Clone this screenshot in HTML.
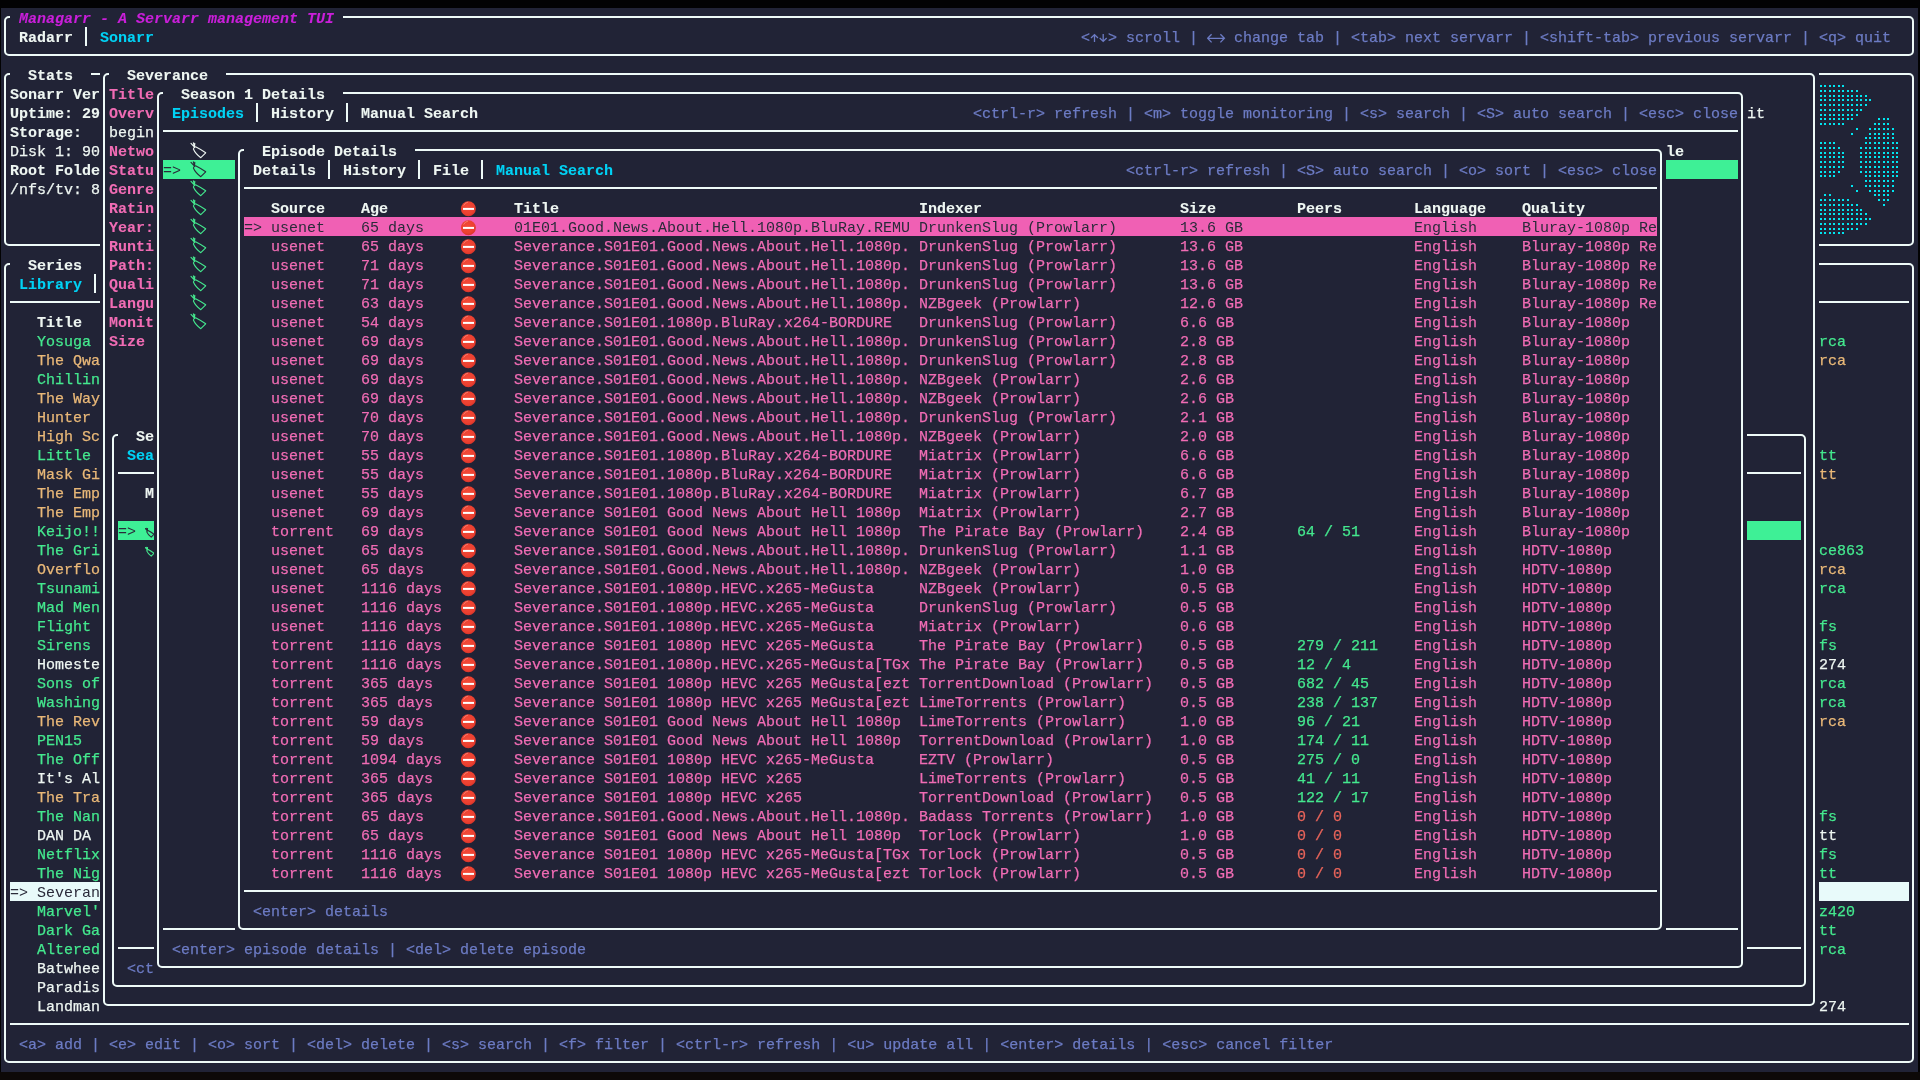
<!DOCTYPE html>
<html><head><meta charset="utf-8"><title>Managarr</title><style>
html,body{margin:0;padding:0;}
body{width:1920px;height:1080px;background:#020203;position:relative;overflow:hidden;}
#wrap{position:absolute;left:0;top:0;width:1920px;height:1080px;will-change:transform;}
#bot{position:absolute;left:0;top:1072px;width:1920px;height:8px;background:#0d0908;}
#term{position:absolute;left:1px;top:8px;width:1917px;height:1064px;background:#212336;}
.r,.b,.t,.s{position:absolute;}
.b{border:2px solid;border-radius:5px;}
.t{-webkit-text-stroke:0.25px currentColor;font-family:"Liberation Mono",monospace;font-size:15px;line-height:19px;height:19px;white-space:pre;}
.B{font-weight:bold;-webkit-text-stroke:0.1px currentColor;}
.I{font-style:italic;}
.D{-webkit-text-stroke:0;}
</style></head>
<body><svg width="0" height="0" style="position:absolute"><defs><radialGradient id="ng" cx="0.45" cy="0.4" r="0.6"><stop offset="0" stop-color="#f24a38"/><stop offset="0.75" stop-color="#ec4030"/><stop offset="1" stop-color="#d8342a"/></radialGradient></defs></svg><div id="term"></div><div id="bot"></div>
<div id="wrap">
<div class="r" style="left:1px;top:8px;width:1917px;height:57px;background:#212336"></div>
<div class="b" style="left:4px;top:16px;width:1906px;height:36px;border-color:#eefaf8"></div>
<div class="r" style="left:10px;top:8px;width:333px;height:19px;background:#212336"></div>
<div class="t B I" style="left:19px;top:9.5px;color:#ca1fda">Managarr - A Servarr management TUI</div>
<div class="t B" style="left:19px;top:28.5px;color:#eef6f2">Radarr</div>
<div class="r" style="left:85px;top:27px;width:2px;height:19px;background:#eefaf8"></div>
<div class="t B" style="left:100px;top:28.5px;color:#00d2f5">Sonarr</div>
<div class="t" style="left:1081px;top:28.5px;color:#6c7bc4">&lt;  &gt; scroll | </div>
<div class="t" style="left:1225px;top:28.5px;color:#6c7bc4"> change tab | &lt;tab&gt; next servarr | &lt;shift-tab&gt; previous servarr | &lt;q&gt; quit</div>
<svg class="s" style="left:1090px;top:27px" width="18" height="19" viewBox="0 0 18 19"><g fill="none" stroke="#6c7bc4" stroke-width="1.3" stroke-linecap="butt" stroke-linejoin="miter"><path d="M4.5 7.6 V15 M1 11 L4.5 7.6 L8 11"/><path d="M13.2 7 V14.4 M9.7 11 L13.2 14.4 L16.7 11"/></g></svg>
<svg class="s" style="left:1207px;top:27px" width="20" height="19" viewBox="0 0 20 19"><g fill="none" stroke="#6c7bc4" stroke-width="1.3" stroke-linecap="butt" stroke-linejoin="miter"><path d="M0.6 11.3 H17.4 M4.6 7.2 L0.6 11.3 L4.6 15.4 M13.4 7.2 L17.4 11.3 L13.4 15.4"/></g></svg>
<div class="r" style="left:1px;top:65px;width:1089px;height:190px;background:#212336"></div>
<div class="b" style="left:4px;top:73px;width:1078px;height:169px;border-color:#eefaf8"></div>
<div class="r" style="left:10px;top:65px;width:81px;height:19px;background:#212336"></div>
<div class="t B" style="left:28px;top:66.5px;color:#eef6f2">Stats</div>
<div class="t B" style="left:10px;top:85.5px;color:#eef6f2">Sonarr Ver</div>
<div class="t B" style="left:10px;top:104.5px;color:#eef6f2">Uptime: 29</div>
<div class="t B" style="left:10px;top:123.5px;color:#eef6f2">Storage:</div>
<div class="t" style="left:10px;top:142.5px;color:#eef6f2">Disk 1: 90</div>
<div class="t B" style="left:10px;top:161.5px;color:#eef6f2">Root Folde</div>
<div class="t" style="left:10px;top:180.5px;color:#eef6f2">/nfs/tv: 8</div>
<div class="r" style="left:1351px;top:65px;width:567px;height:190px;background:#212336"></div>
<div class="b" style="left:1354px;top:73px;width:556px;height:169px;border-color:#eefaf8"></div>
<svg class="s" style="left:1819px;top:84px" width="90" height="152" fill="#00e5f0"><rect x="1" y="1" width="2" height="2"/><rect x="5" y="1" width="2" height="2"/><rect x="10" y="1" width="2" height="2"/><rect x="14" y="1" width="2" height="2"/><rect x="19" y="1" width="2" height="2"/><rect x="23" y="1" width="2" height="2"/><rect x="1" y="6" width="2" height="2"/><rect x="5" y="6" width="2" height="2"/><rect x="10" y="6" width="2" height="2"/><rect x="14" y="6" width="2" height="2"/><rect x="19" y="6" width="2" height="2"/><rect x="23" y="6" width="2" height="2"/><rect x="28" y="6" width="2" height="2"/><rect x="32" y="6" width="2" height="2"/><rect x="37" y="6" width="2" height="2"/><rect x="1" y="11" width="2" height="2"/><rect x="5" y="11" width="2" height="2"/><rect x="10" y="11" width="2" height="2"/><rect x="14" y="11" width="2" height="2"/><rect x="19" y="11" width="2" height="2"/><rect x="23" y="11" width="2" height="2"/><rect x="28" y="11" width="2" height="2"/><rect x="32" y="11" width="2" height="2"/><rect x="37" y="11" width="2" height="2"/><rect x="41" y="11" width="2" height="2"/><rect x="46" y="11" width="2" height="2"/><rect x="1" y="15" width="2" height="2"/><rect x="5" y="15" width="2" height="2"/><rect x="10" y="15" width="2" height="2"/><rect x="14" y="15" width="2" height="2"/><rect x="19" y="15" width="2" height="2"/><rect x="23" y="15" width="2" height="2"/><rect x="28" y="15" width="2" height="2"/><rect x="32" y="15" width="2" height="2"/><rect x="37" y="15" width="2" height="2"/><rect x="41" y="15" width="2" height="2"/><rect x="46" y="15" width="2" height="2"/><rect x="50" y="15" width="2" height="2"/><rect x="1" y="20" width="2" height="2"/><rect x="5" y="20" width="2" height="2"/><rect x="10" y="20" width="2" height="2"/><rect x="14" y="20" width="2" height="2"/><rect x="19" y="20" width="2" height="2"/><rect x="23" y="20" width="2" height="2"/><rect x="28" y="20" width="2" height="2"/><rect x="32" y="20" width="2" height="2"/><rect x="37" y="20" width="2" height="2"/><rect x="41" y="20" width="2" height="2"/><rect x="46" y="20" width="2" height="2"/><rect x="1" y="25" width="2" height="2"/><rect x="5" y="25" width="2" height="2"/><rect x="10" y="25" width="2" height="2"/><rect x="14" y="25" width="2" height="2"/><rect x="19" y="25" width="2" height="2"/><rect x="23" y="25" width="2" height="2"/><rect x="28" y="25" width="2" height="2"/><rect x="32" y="25" width="2" height="2"/><rect x="37" y="25" width="2" height="2"/><rect x="41" y="25" width="2" height="2"/><rect x="1" y="30" width="2" height="2"/><rect x="5" y="30" width="2" height="2"/><rect x="10" y="30" width="2" height="2"/><rect x="14" y="30" width="2" height="2"/><rect x="19" y="30" width="2" height="2"/><rect x="23" y="30" width="2" height="2"/><rect x="28" y="30" width="2" height="2"/><rect x="32" y="30" width="2" height="2"/><rect x="37" y="30" width="2" height="2"/><rect x="1" y="34" width="2" height="2"/><rect x="5" y="34" width="2" height="2"/><rect x="10" y="34" width="2" height="2"/><rect x="14" y="34" width="2" height="2"/><rect x="19" y="34" width="2" height="2"/><rect x="23" y="34" width="2" height="2"/><rect x="28" y="34" width="2" height="2"/><rect x="32" y="34" width="2" height="2"/><rect x="59" y="34" width="2" height="2"/><rect x="64" y="34" width="2" height="2"/><rect x="68" y="34" width="2" height="2"/><rect x="1" y="39" width="2" height="2"/><rect x="5" y="39" width="2" height="2"/><rect x="10" y="39" width="2" height="2"/><rect x="14" y="39" width="2" height="2"/><rect x="19" y="39" width="2" height="2"/><rect x="23" y="39" width="2" height="2"/><rect x="55" y="39" width="2" height="2"/><rect x="59" y="39" width="2" height="2"/><rect x="64" y="39" width="2" height="2"/><rect x="68" y="39" width="2" height="2"/><rect x="37" y="44" width="2" height="2"/><rect x="50" y="44" width="2" height="2"/><rect x="55" y="44" width="2" height="2"/><rect x="59" y="44" width="2" height="2"/><rect x="64" y="44" width="2" height="2"/><rect x="68" y="44" width="2" height="2"/><rect x="73" y="44" width="2" height="2"/><rect x="32" y="49" width="2" height="2"/><rect x="50" y="49" width="2" height="2"/><rect x="55" y="49" width="2" height="2"/><rect x="59" y="49" width="2" height="2"/><rect x="64" y="49" width="2" height="2"/><rect x="68" y="49" width="2" height="2"/><rect x="73" y="49" width="2" height="2"/><rect x="46" y="53" width="2" height="2"/><rect x="50" y="53" width="2" height="2"/><rect x="55" y="53" width="2" height="2"/><rect x="59" y="53" width="2" height="2"/><rect x="64" y="53" width="2" height="2"/><rect x="68" y="53" width="2" height="2"/><rect x="73" y="53" width="2" height="2"/><rect x="1" y="58" width="2" height="2"/><rect x="5" y="58" width="2" height="2"/><rect x="10" y="58" width="2" height="2"/><rect x="14" y="58" width="2" height="2"/><rect x="46" y="58" width="2" height="2"/><rect x="50" y="58" width="2" height="2"/><rect x="55" y="58" width="2" height="2"/><rect x="59" y="58" width="2" height="2"/><rect x="64" y="58" width="2" height="2"/><rect x="68" y="58" width="2" height="2"/><rect x="73" y="58" width="2" height="2"/><rect x="77" y="58" width="2" height="2"/><rect x="1" y="63" width="2" height="2"/><rect x="5" y="63" width="2" height="2"/><rect x="10" y="63" width="2" height="2"/><rect x="14" y="63" width="2" height="2"/><rect x="19" y="63" width="2" height="2"/><rect x="41" y="63" width="2" height="2"/><rect x="46" y="63" width="2" height="2"/><rect x="50" y="63" width="2" height="2"/><rect x="55" y="63" width="2" height="2"/><rect x="59" y="63" width="2" height="2"/><rect x="64" y="63" width="2" height="2"/><rect x="68" y="63" width="2" height="2"/><rect x="73" y="63" width="2" height="2"/><rect x="77" y="63" width="2" height="2"/><rect x="1" y="68" width="2" height="2"/><rect x="5" y="68" width="2" height="2"/><rect x="10" y="68" width="2" height="2"/><rect x="14" y="68" width="2" height="2"/><rect x="19" y="68" width="2" height="2"/><rect x="23" y="68" width="2" height="2"/><rect x="41" y="68" width="2" height="2"/><rect x="46" y="68" width="2" height="2"/><rect x="50" y="68" width="2" height="2"/><rect x="55" y="68" width="2" height="2"/><rect x="59" y="68" width="2" height="2"/><rect x="64" y="68" width="2" height="2"/><rect x="68" y="68" width="2" height="2"/><rect x="73" y="68" width="2" height="2"/><rect x="77" y="68" width="2" height="2"/><rect x="1" y="72" width="2" height="2"/><rect x="5" y="72" width="2" height="2"/><rect x="10" y="72" width="2" height="2"/><rect x="14" y="72" width="2" height="2"/><rect x="19" y="72" width="2" height="2"/><rect x="23" y="72" width="2" height="2"/><rect x="41" y="72" width="2" height="2"/><rect x="46" y="72" width="2" height="2"/><rect x="50" y="72" width="2" height="2"/><rect x="55" y="72" width="2" height="2"/><rect x="59" y="72" width="2" height="2"/><rect x="64" y="72" width="2" height="2"/><rect x="68" y="72" width="2" height="2"/><rect x="73" y="72" width="2" height="2"/><rect x="77" y="72" width="2" height="2"/><rect x="1" y="77" width="2" height="2"/><rect x="5" y="77" width="2" height="2"/><rect x="10" y="77" width="2" height="2"/><rect x="14" y="77" width="2" height="2"/><rect x="19" y="77" width="2" height="2"/><rect x="23" y="77" width="2" height="2"/><rect x="41" y="77" width="2" height="2"/><rect x="46" y="77" width="2" height="2"/><rect x="50" y="77" width="2" height="2"/><rect x="55" y="77" width="2" height="2"/><rect x="59" y="77" width="2" height="2"/><rect x="64" y="77" width="2" height="2"/><rect x="68" y="77" width="2" height="2"/><rect x="73" y="77" width="2" height="2"/><rect x="77" y="77" width="2" height="2"/><rect x="1" y="82" width="2" height="2"/><rect x="5" y="82" width="2" height="2"/><rect x="10" y="82" width="2" height="2"/><rect x="14" y="82" width="2" height="2"/><rect x="19" y="82" width="2" height="2"/><rect x="23" y="82" width="2" height="2"/><rect x="41" y="82" width="2" height="2"/><rect x="46" y="82" width="2" height="2"/><rect x="50" y="82" width="2" height="2"/><rect x="55" y="82" width="2" height="2"/><rect x="59" y="82" width="2" height="2"/><rect x="64" y="82" width="2" height="2"/><rect x="68" y="82" width="2" height="2"/><rect x="73" y="82" width="2" height="2"/><rect x="77" y="82" width="2" height="2"/><rect x="1" y="87" width="2" height="2"/><rect x="5" y="87" width="2" height="2"/><rect x="10" y="87" width="2" height="2"/><rect x="14" y="87" width="2" height="2"/><rect x="19" y="87" width="2" height="2"/><rect x="41" y="87" width="2" height="2"/><rect x="46" y="87" width="2" height="2"/><rect x="50" y="87" width="2" height="2"/><rect x="55" y="87" width="2" height="2"/><rect x="59" y="87" width="2" height="2"/><rect x="64" y="87" width="2" height="2"/><rect x="68" y="87" width="2" height="2"/><rect x="73" y="87" width="2" height="2"/><rect x="77" y="87" width="2" height="2"/><rect x="1" y="91" width="2" height="2"/><rect x="5" y="91" width="2" height="2"/><rect x="10" y="91" width="2" height="2"/><rect x="14" y="91" width="2" height="2"/><rect x="46" y="91" width="2" height="2"/><rect x="50" y="91" width="2" height="2"/><rect x="55" y="91" width="2" height="2"/><rect x="59" y="91" width="2" height="2"/><rect x="64" y="91" width="2" height="2"/><rect x="68" y="91" width="2" height="2"/><rect x="73" y="91" width="2" height="2"/><rect x="77" y="91" width="2" height="2"/><rect x="46" y="96" width="2" height="2"/><rect x="50" y="96" width="2" height="2"/><rect x="55" y="96" width="2" height="2"/><rect x="59" y="96" width="2" height="2"/><rect x="64" y="96" width="2" height="2"/><rect x="68" y="96" width="2" height="2"/><rect x="73" y="96" width="2" height="2"/><rect x="32" y="101" width="2" height="2"/><rect x="46" y="101" width="2" height="2"/><rect x="50" y="101" width="2" height="2"/><rect x="55" y="101" width="2" height="2"/><rect x="59" y="101" width="2" height="2"/><rect x="64" y="101" width="2" height="2"/><rect x="68" y="101" width="2" height="2"/><rect x="73" y="101" width="2" height="2"/><rect x="37" y="106" width="2" height="2"/><rect x="50" y="106" width="2" height="2"/><rect x="55" y="106" width="2" height="2"/><rect x="59" y="106" width="2" height="2"/><rect x="64" y="106" width="2" height="2"/><rect x="68" y="106" width="2" height="2"/><rect x="73" y="106" width="2" height="2"/><rect x="5" y="110" width="2" height="2"/><rect x="10" y="110" width="2" height="2"/><rect x="55" y="110" width="2" height="2"/><rect x="59" y="110" width="2" height="2"/><rect x="64" y="110" width="2" height="2"/><rect x="68" y="110" width="2" height="2"/><rect x="1" y="115" width="2" height="2"/><rect x="5" y="115" width="2" height="2"/><rect x="10" y="115" width="2" height="2"/><rect x="14" y="115" width="2" height="2"/><rect x="19" y="115" width="2" height="2"/><rect x="23" y="115" width="2" height="2"/><rect x="28" y="115" width="2" height="2"/><rect x="59" y="115" width="2" height="2"/><rect x="64" y="115" width="2" height="2"/><rect x="68" y="115" width="2" height="2"/><rect x="1" y="120" width="2" height="2"/><rect x="5" y="120" width="2" height="2"/><rect x="10" y="120" width="2" height="2"/><rect x="14" y="120" width="2" height="2"/><rect x="19" y="120" width="2" height="2"/><rect x="23" y="120" width="2" height="2"/><rect x="28" y="120" width="2" height="2"/><rect x="32" y="120" width="2" height="2"/><rect x="37" y="120" width="2" height="2"/><rect x="64" y="120" width="2" height="2"/><rect x="1" y="125" width="2" height="2"/><rect x="5" y="125" width="2" height="2"/><rect x="10" y="125" width="2" height="2"/><rect x="14" y="125" width="2" height="2"/><rect x="19" y="125" width="2" height="2"/><rect x="23" y="125" width="2" height="2"/><rect x="28" y="125" width="2" height="2"/><rect x="32" y="125" width="2" height="2"/><rect x="37" y="125" width="2" height="2"/><rect x="41" y="125" width="2" height="2"/><rect x="1" y="129" width="2" height="2"/><rect x="5" y="129" width="2" height="2"/><rect x="10" y="129" width="2" height="2"/><rect x="14" y="129" width="2" height="2"/><rect x="19" y="129" width="2" height="2"/><rect x="23" y="129" width="2" height="2"/><rect x="28" y="129" width="2" height="2"/><rect x="32" y="129" width="2" height="2"/><rect x="37" y="129" width="2" height="2"/><rect x="41" y="129" width="2" height="2"/><rect x="46" y="129" width="2" height="2"/><rect x="1" y="134" width="2" height="2"/><rect x="5" y="134" width="2" height="2"/><rect x="10" y="134" width="2" height="2"/><rect x="14" y="134" width="2" height="2"/><rect x="19" y="134" width="2" height="2"/><rect x="23" y="134" width="2" height="2"/><rect x="28" y="134" width="2" height="2"/><rect x="32" y="134" width="2" height="2"/><rect x="37" y="134" width="2" height="2"/><rect x="41" y="134" width="2" height="2"/><rect x="46" y="134" width="2" height="2"/><rect x="50" y="134" width="2" height="2"/><rect x="1" y="139" width="2" height="2"/><rect x="5" y="139" width="2" height="2"/><rect x="10" y="139" width="2" height="2"/><rect x="14" y="139" width="2" height="2"/><rect x="19" y="139" width="2" height="2"/><rect x="23" y="139" width="2" height="2"/><rect x="28" y="139" width="2" height="2"/><rect x="32" y="139" width="2" height="2"/><rect x="37" y="139" width="2" height="2"/><rect x="41" y="139" width="2" height="2"/><rect x="46" y="139" width="2" height="2"/><rect x="1" y="144" width="2" height="2"/><rect x="5" y="144" width="2" height="2"/><rect x="10" y="144" width="2" height="2"/><rect x="14" y="144" width="2" height="2"/><rect x="19" y="144" width="2" height="2"/><rect x="23" y="144" width="2" height="2"/><rect x="28" y="144" width="2" height="2"/><rect x="32" y="144" width="2" height="2"/><rect x="37" y="144" width="2" height="2"/><rect x="1" y="148" width="2" height="2"/><rect x="5" y="148" width="2" height="2"/><rect x="10" y="148" width="2" height="2"/><rect x="14" y="148" width="2" height="2"/><rect x="19" y="148" width="2" height="2"/><rect x="23" y="148" width="2" height="2"/></svg>
<div class="r" style="left:1px;top:255px;width:1917px;height:817px;background:#212336"></div>
<div class="b" style="left:4px;top:263px;width:1906px;height:796px;border-color:#eefaf8"></div>
<div class="r" style="left:10px;top:255px;width:90px;height:19px;background:#212336"></div>
<div class="t B" style="left:28px;top:256.5px;color:#eef6f2">Series</div>
<div class="t B" style="left:19px;top:275.5px;color:#00d2f5">Library</div>
<div class="r" style="left:94px;top:274px;width:2px;height:19px;background:#eefaf8"></div>
<div class="r" style="left:10px;top:301px;width:1899px;height:2px;background:#eefaf8"></div>
<div class="t B" style="left:37px;top:313.5px;color:#eef6f2">Title</div>
<div class="t" style="left:37px;top:332.5px;color:#44e88e">Yosuga</div>
<div class="t" style="left:1819px;top:332.5px;color:#44e88e">rca</div>
<div class="t" style="left:37px;top:351.5px;color:#e9b878">The Qwa</div>
<div class="t" style="left:1819px;top:351.5px;color:#e9b878">rca</div>
<div class="t" style="left:37px;top:370.5px;color:#44e88e">Chillin</div>
<div class="t" style="left:37px;top:389.5px;color:#e9b878">The Way</div>
<div class="t" style="left:37px;top:408.5px;color:#e9b878">Hunter</div>
<div class="t" style="left:37px;top:427.5px;color:#e9b878">High Sc</div>
<div class="t" style="left:37px;top:446.5px;color:#44e88e">Little</div>
<div class="t" style="left:1819px;top:446.5px;color:#44e88e">tt</div>
<div class="t" style="left:37px;top:465.5px;color:#e9b878">Mask Gi</div>
<div class="t" style="left:1819px;top:465.5px;color:#e9b878">tt</div>
<div class="t" style="left:37px;top:484.5px;color:#e9b878">The Emp</div>
<div class="t" style="left:37px;top:503.5px;color:#e9b878">The Emp</div>
<div class="t" style="left:37px;top:522.5px;color:#44e88e">Keijo!!</div>
<div class="t" style="left:37px;top:541.5px;color:#44e88e">The Gri</div>
<div class="t" style="left:1819px;top:541.5px;color:#44e88e">ce863</div>
<div class="t" style="left:37px;top:560.5px;color:#e9b878">Overflo</div>
<div class="t" style="left:1819px;top:560.5px;color:#e9b878">rca</div>
<div class="t" style="left:37px;top:579.5px;color:#44e88e">Tsunami</div>
<div class="t" style="left:1819px;top:579.5px;color:#44e88e">rca</div>
<div class="t" style="left:37px;top:598.5px;color:#44e88e">Mad Men</div>
<div class="t" style="left:37px;top:617.5px;color:#44e88e">Flight</div>
<div class="t" style="left:1819px;top:617.5px;color:#44e88e">fs</div>
<div class="t" style="left:37px;top:636.5px;color:#44e88e">Sirens</div>
<div class="t" style="left:1819px;top:636.5px;color:#44e88e">fs</div>
<div class="t" style="left:37px;top:655.5px;color:#eef6f2">Homeste</div>
<div class="t" style="left:1819px;top:655.5px;color:#eef6f2">274</div>
<div class="t" style="left:37px;top:674.5px;color:#44e88e">Sons of</div>
<div class="t" style="left:1819px;top:674.5px;color:#44e88e">rca</div>
<div class="t" style="left:37px;top:693.5px;color:#44e88e">Washing</div>
<div class="t" style="left:1819px;top:693.5px;color:#44e88e">rca</div>
<div class="t" style="left:37px;top:712.5px;color:#e9b878">The Rev</div>
<div class="t" style="left:1819px;top:712.5px;color:#e9b878">rca</div>
<div class="t" style="left:37px;top:731.5px;color:#44e88e">PEN15</div>
<div class="t" style="left:37px;top:750.5px;color:#44e88e">The Off</div>
<div class="t" style="left:37px;top:769.5px;color:#eef6f2">It&#x27;s Al</div>
<div class="t" style="left:37px;top:788.5px;color:#e9b878">The Tra</div>
<div class="t" style="left:37px;top:807.5px;color:#44e88e">The Nan</div>
<div class="t" style="left:1819px;top:807.5px;color:#44e88e">fs</div>
<div class="t" style="left:37px;top:826.5px;color:#eef6f2">DAN DA</div>
<div class="t" style="left:1819px;top:826.5px;color:#eef6f2">tt</div>
<div class="t" style="left:37px;top:845.5px;color:#44e88e">Netflix</div>
<div class="t" style="left:1819px;top:845.5px;color:#44e88e">fs</div>
<div class="t" style="left:37px;top:864.5px;color:#44e88e">The Nig</div>
<div class="t" style="left:1819px;top:864.5px;color:#44e88e">tt</div>
<div class="r" style="left:10px;top:882px;width:1899px;height:19px;background:#e8fafa"></div>
<div class="t D" style="left:10px;top:883.5px;color:#2a2b3a">=&gt; Severan</div>
<div class="t" style="left:37px;top:902.5px;color:#44e88e">Marvel&#x27;</div>
<div class="t" style="left:1819px;top:902.5px;color:#44e88e">z420</div>
<div class="t" style="left:37px;top:921.5px;color:#44e88e">Dark Ga</div>
<div class="t" style="left:1819px;top:921.5px;color:#44e88e">tt</div>
<div class="t" style="left:37px;top:940.5px;color:#44e88e">Altered</div>
<div class="t" style="left:1819px;top:940.5px;color:#44e88e">rca</div>
<div class="t" style="left:37px;top:959.5px;color:#eef6f2">Batwhee</div>
<div class="t" style="left:37px;top:978.5px;color:#eef6f2">Paradis</div>
<div class="t" style="left:37px;top:997.5px;color:#eef6f2">Landman</div>
<div class="t" style="left:1819px;top:997.5px;color:#eef6f2">274</div>
<div class="r" style="left:10px;top:1023px;width:1899px;height:2px;background:#eefaf8"></div>
<div class="t" style="left:19px;top:1035.5px;color:#6c7bc4">&lt;a&gt; add | &lt;e&gt; edit | &lt;o&gt; sort | &lt;del&gt; delete | &lt;s&gt; search | &lt;f&gt; filter | &lt;ctrl-r&gt; refresh | &lt;u&gt; update all | &lt;enter&gt; details | &lt;esc&gt; cancel filter</div>
<div class="r" style="left:100px;top:65px;width:1719px;height:950px;background:#212336"></div>
<div class="b" style="left:103px;top:73px;width:1708px;height:929px;border-color:#eefaf8"></div>
<div class="r" style="left:109px;top:65px;width:117px;height:19px;background:#212336"></div>
<div class="t B" style="left:127px;top:66.5px;color:#eef6f2">Severance</div>
<div class="t B" style="left:109px;top:85.5px;color:#f06cb4">Title</div>
<div class="t B" style="left:109px;top:104.5px;color:#f06cb4">Overv</div>
<div class="t" style="left:109px;top:123.5px;color:#eef6f2">begin</div>
<div class="t B" style="left:109px;top:142.5px;color:#f06cb4">Netwo</div>
<div class="t B" style="left:109px;top:161.5px;color:#f06cb4">Statu</div>
<div class="t B" style="left:109px;top:180.5px;color:#f06cb4">Genre</div>
<div class="t B" style="left:109px;top:199.5px;color:#f06cb4">Ratin</div>
<div class="t B" style="left:109px;top:218.5px;color:#f06cb4">Year:</div>
<div class="t B" style="left:109px;top:237.5px;color:#f06cb4">Runti</div>
<div class="t B" style="left:109px;top:256.5px;color:#f06cb4">Path:</div>
<div class="t B" style="left:109px;top:275.5px;color:#f06cb4">Quali</div>
<div class="t B" style="left:109px;top:294.5px;color:#f06cb4">Langu</div>
<div class="t B" style="left:109px;top:313.5px;color:#f06cb4">Monit</div>
<div class="t B" style="left:109px;top:332.5px;color:#f06cb4">Size</div>
<div class="t" style="left:1747px;top:104.5px;color:#eef6f2">it</div>
<div class="r" style="left:109px;top:426px;width:1701px;height:570px;background:#212336"></div>
<div class="b" style="left:112px;top:434px;width:1690px;height:549px;border-color:#eefaf8"></div>
<div class="r" style="left:118px;top:426px;width:99px;height:19px;background:#212336"></div>
<div class="t B" style="left:136px;top:427.5px;color:#eef6f2">Seasons</div>
<div class="t B" style="left:127px;top:446.5px;color:#00d2f5">Seasons</div>
<div class="r" style="left:118px;top:472px;width:1683px;height:2px;background:#eefaf8"></div>
<div class="t B" style="left:145px;top:484.5px;color:#eef6f2">Monitored</div>
<div class="r" style="left:118px;top:521px;width:1683px;height:19px;background:#3ef096"></div>
<div class="t D" style="left:118px;top:522.5px;color:#2a2b3a">=&gt;</div>
<svg class="s" style="left:145px;top:521px" width="9" height="19" viewBox="0 0 9 19"><g transform="translate(-0.3 6.1) scale(0.6)" fill="none" stroke="#2a2b3a" stroke-width="1.8" stroke-linejoin="round" stroke-linecap="round"><path d="M1 2.3 L4.5 6.1 M3.4 1.9 L4.5 6.1 M4.8 2.2 L4.5 6.1"/><path d="M3.4 8 Q3.7 6.3 5.6 5.8 Q10.6 8.3 15.7 11.8 L10.8 16.7 Q5.3 12.6 3.4 8 Z"/></g></svg>
<svg class="s" style="left:145px;top:540px" width="9" height="19" viewBox="0 0 9 19"><g transform="translate(-0.3 6.1) scale(0.6)" fill="none" stroke="#44e88e" stroke-width="1.8" stroke-linejoin="round" stroke-linecap="round"><path d="M1 2.3 L4.5 6.1 M3.4 1.9 L4.5 6.1 M4.8 2.2 L4.5 6.1"/><path d="M3.4 8 Q3.7 6.3 5.6 5.8 Q10.6 8.3 15.7 11.8 L10.8 16.7 Q5.3 12.6 3.4 8 Z"/></g></svg>
<div class="r" style="left:118px;top:947px;width:1683px;height:2px;background:#eefaf8"></div>
<div class="t" style="left:127px;top:959.5px;color:#6c7bc4">&lt;ctrl-r&gt; refresh</div>
<div class="r" style="left:154px;top:84px;width:1593px;height:893px;background:#212336"></div>
<div class="b" style="left:157px;top:92px;width:1582px;height:872px;border-color:#eefaf8"></div>
<div class="r" style="left:163px;top:84px;width:180px;height:19px;background:#212336"></div>
<div class="t B" style="left:181px;top:85.5px;color:#eef6f2">Season 1 Details</div>
<div class="t B" style="left:172px;top:104.5px;color:#00d2f5">Episodes</div>
<div class="r" style="left:256px;top:103px;width:2px;height:19px;background:#eefaf8"></div>
<div class="t B" style="left:271px;top:104.5px;color:#eef6f2">History</div>
<div class="r" style="left:346px;top:103px;width:2px;height:19px;background:#eefaf8"></div>
<div class="t B" style="left:361px;top:104.5px;color:#eef6f2">Manual Search</div>
<div class="t" style="left:973px;top:104.5px;color:#6c7bc4">&lt;ctrl-r&gt; refresh | &lt;m&gt; toggle monitoring | &lt;s&gt; search | &lt;S&gt; auto search | &lt;esc&gt; close</div>
<div class="r" style="left:163px;top:130px;width:1575px;height:2px;background:#eefaf8"></div>
<svg class="s" style="left:190px;top:141px" width="18" height="19" viewBox="0 0 18 19"><g fill="none" stroke="#eef6f2" stroke-width="1.1" stroke-linejoin="round" stroke-linecap="round"><path d="M1 2.3 L4.5 6.1 M3.4 1.9 L4.5 6.1 M4.8 2.2 L4.5 6.1"/><path d="M3.4 8 Q3.7 6.3 5.6 5.8 Q10.6 8.3 15.7 11.8 L10.8 16.7 Q5.3 12.6 3.4 8 Z"/></g></svg>
<div class="t B" style="left:1666px;top:142.5px;color:#eef6f2">le</div>
<div class="r" style="left:163px;top:160px;width:1575px;height:19px;background:#3ef096"></div>
<div class="t D" style="left:163px;top:161.5px;color:#2a2b3a">=&gt;</div>
<svg class="s" style="left:190px;top:160px" width="18" height="19" viewBox="0 0 18 19"><g fill="none" stroke="#2a2b3a" stroke-width="1.1" stroke-linejoin="round" stroke-linecap="round"><path d="M1 2.3 L4.5 6.1 M3.4 1.9 L4.5 6.1 M4.8 2.2 L4.5 6.1"/><path d="M3.4 8 Q3.7 6.3 5.6 5.8 Q10.6 8.3 15.7 11.8 L10.8 16.7 Q5.3 12.6 3.4 8 Z"/></g></svg>
<svg class="s" style="left:190px;top:179px" width="18" height="19" viewBox="0 0 18 19"><g fill="none" stroke="#44e88e" stroke-width="1.1" stroke-linejoin="round" stroke-linecap="round"><path d="M1 2.3 L4.5 6.1 M3.4 1.9 L4.5 6.1 M4.8 2.2 L4.5 6.1"/><path d="M3.4 8 Q3.7 6.3 5.6 5.8 Q10.6 8.3 15.7 11.8 L10.8 16.7 Q5.3 12.6 3.4 8 Z"/></g></svg>
<svg class="s" style="left:190px;top:198px" width="18" height="19" viewBox="0 0 18 19"><g fill="none" stroke="#44e88e" stroke-width="1.1" stroke-linejoin="round" stroke-linecap="round"><path d="M1 2.3 L4.5 6.1 M3.4 1.9 L4.5 6.1 M4.8 2.2 L4.5 6.1"/><path d="M3.4 8 Q3.7 6.3 5.6 5.8 Q10.6 8.3 15.7 11.8 L10.8 16.7 Q5.3 12.6 3.4 8 Z"/></g></svg>
<svg class="s" style="left:190px;top:217px" width="18" height="19" viewBox="0 0 18 19"><g fill="none" stroke="#44e88e" stroke-width="1.1" stroke-linejoin="round" stroke-linecap="round"><path d="M1 2.3 L4.5 6.1 M3.4 1.9 L4.5 6.1 M4.8 2.2 L4.5 6.1"/><path d="M3.4 8 Q3.7 6.3 5.6 5.8 Q10.6 8.3 15.7 11.8 L10.8 16.7 Q5.3 12.6 3.4 8 Z"/></g></svg>
<svg class="s" style="left:190px;top:236px" width="18" height="19" viewBox="0 0 18 19"><g fill="none" stroke="#44e88e" stroke-width="1.1" stroke-linejoin="round" stroke-linecap="round"><path d="M1 2.3 L4.5 6.1 M3.4 1.9 L4.5 6.1 M4.8 2.2 L4.5 6.1"/><path d="M3.4 8 Q3.7 6.3 5.6 5.8 Q10.6 8.3 15.7 11.8 L10.8 16.7 Q5.3 12.6 3.4 8 Z"/></g></svg>
<svg class="s" style="left:190px;top:255px" width="18" height="19" viewBox="0 0 18 19"><g fill="none" stroke="#44e88e" stroke-width="1.1" stroke-linejoin="round" stroke-linecap="round"><path d="M1 2.3 L4.5 6.1 M3.4 1.9 L4.5 6.1 M4.8 2.2 L4.5 6.1"/><path d="M3.4 8 Q3.7 6.3 5.6 5.8 Q10.6 8.3 15.7 11.8 L10.8 16.7 Q5.3 12.6 3.4 8 Z"/></g></svg>
<svg class="s" style="left:190px;top:274px" width="18" height="19" viewBox="0 0 18 19"><g fill="none" stroke="#44e88e" stroke-width="1.1" stroke-linejoin="round" stroke-linecap="round"><path d="M1 2.3 L4.5 6.1 M3.4 1.9 L4.5 6.1 M4.8 2.2 L4.5 6.1"/><path d="M3.4 8 Q3.7 6.3 5.6 5.8 Q10.6 8.3 15.7 11.8 L10.8 16.7 Q5.3 12.6 3.4 8 Z"/></g></svg>
<svg class="s" style="left:190px;top:293px" width="18" height="19" viewBox="0 0 18 19"><g fill="none" stroke="#44e88e" stroke-width="1.1" stroke-linejoin="round" stroke-linecap="round"><path d="M1 2.3 L4.5 6.1 M3.4 1.9 L4.5 6.1 M4.8 2.2 L4.5 6.1"/><path d="M3.4 8 Q3.7 6.3 5.6 5.8 Q10.6 8.3 15.7 11.8 L10.8 16.7 Q5.3 12.6 3.4 8 Z"/></g></svg>
<svg class="s" style="left:190px;top:312px" width="18" height="19" viewBox="0 0 18 19"><g fill="none" stroke="#44e88e" stroke-width="1.1" stroke-linejoin="round" stroke-linecap="round"><path d="M1 2.3 L4.5 6.1 M3.4 1.9 L4.5 6.1 M4.8 2.2 L4.5 6.1"/><path d="M3.4 8 Q3.7 6.3 5.6 5.8 Q10.6 8.3 15.7 11.8 L10.8 16.7 Q5.3 12.6 3.4 8 Z"/></g></svg>
<div class="r" style="left:163px;top:928px;width:1575px;height:2px;background:#eefaf8"></div>
<div class="t" style="left:172px;top:940.5px;color:#6c7bc4">&lt;enter&gt; episode details | &lt;del&gt; delete episode</div>
<div class="r" style="left:235px;top:141px;width:1431px;height:798px;background:#212336"></div>
<div class="b" style="left:238px;top:149px;width:1420px;height:777px;border-color:#eefaf8"></div>
<div class="r" style="left:244px;top:141px;width:171px;height:19px;background:#212336"></div>
<div class="t B" style="left:262px;top:142.5px;color:#eef6f2">Episode Details</div>
<div class="t B" style="left:253px;top:161.5px;color:#eef6f2">Details</div>
<div class="r" style="left:328px;top:160px;width:2px;height:19px;background:#eefaf8"></div>
<div class="t B" style="left:343px;top:161.5px;color:#eef6f2">History</div>
<div class="r" style="left:418px;top:160px;width:2px;height:19px;background:#eefaf8"></div>
<div class="t B" style="left:433px;top:161.5px;color:#eef6f2">File</div>
<div class="r" style="left:481px;top:160px;width:2px;height:19px;background:#eefaf8"></div>
<div class="t B" style="left:496px;top:161.5px;color:#00d2f5">Manual Search</div>
<div class="t" style="left:1126px;top:161.5px;color:#6c7bc4">&lt;ctrl-r&gt; refresh | &lt;S&gt; auto search | &lt;o&gt; sort | &lt;esc&gt; close</div>
<div class="r" style="left:244px;top:187px;width:1413px;height:2px;background:#eefaf8"></div>
<div class="t B" style="left:271px;top:199.5px;color:#eef6f2">Source</div>
<div class="t B" style="left:361px;top:199.5px;color:#eef6f2">Age</div>
<div class="t B" style="left:514px;top:199.5px;color:#eef6f2">Title</div>
<div class="t B" style="left:919px;top:199.5px;color:#eef6f2">Indexer</div>
<div class="t B" style="left:1180px;top:199.5px;color:#eef6f2">Size</div>
<div class="t B" style="left:1297px;top:199.5px;color:#eef6f2">Peers</div>
<div class="t B" style="left:1414px;top:199.5px;color:#eef6f2">Language</div>
<div class="t B" style="left:1522px;top:199.5px;color:#eef6f2">Quality</div>
<svg class="s" style="left:460px;top:198px" width="18" height="19" viewBox="0 0 18 19"><circle cx="8.4" cy="10.8" r="7.5" fill="url(#ng)"/><path d="M3.6 7.6 Q5 4.6 8 4.1" fill="none" stroke="#ff9a8a" stroke-width="0.8" stroke-opacity="0.8"/><rect x="3" y="9.9" width="11" height="2" fill="#fff"/></svg>
<div class="r" style="left:244px;top:217px;width:1413px;height:19px;background:#f060b4"></div>
<div class="t D" style="left:244px;top:218.5px;color:#2a2b3a">=&gt;</div>
<div class="t D" style="left:271px;top:218.5px;color:#2a2b3a">usenet</div>
<div class="t D" style="left:361px;top:218.5px;color:#2a2b3a">65 days</div>
<div class="t D" style="left:514px;top:218.5px;color:#2a2b3a">01E01.Good.News.About.Hell.1080p.BluRay.REMU</div>
<div class="t D" style="left:919px;top:218.5px;color:#2a2b3a">DrunkenSlug (Prowlarr)</div>
<div class="t D" style="left:1180px;top:218.5px;color:#2a2b3a">13.6 GB</div>
<div class="t D" style="left:1414px;top:218.5px;color:#2a2b3a">English</div>
<div class="t D" style="left:1522px;top:218.5px;color:#2a2b3a">Bluray-1080p Re</div>
<svg class="s" style="left:460px;top:217px" width="18" height="19" viewBox="0 0 18 19"><circle cx="8.4" cy="10.8" r="7.5" fill="url(#ng)"/><path d="M3.6 7.6 Q5 4.6 8 4.1" fill="none" stroke="#ff9a8a" stroke-width="0.8" stroke-opacity="0.8"/><rect x="3" y="9.9" width="11" height="2" fill="#fff"/></svg>
<div class="t" style="left:271px;top:237.5px;color:#f06cb4">usenet</div>
<div class="t" style="left:361px;top:237.5px;color:#f06cb4">65 days</div>
<div class="t" style="left:514px;top:237.5px;color:#f06cb4">Severance.S01E01.Good.News.About.Hell.1080p.</div>
<div class="t" style="left:919px;top:237.5px;color:#f06cb4">DrunkenSlug (Prowlarr)</div>
<div class="t" style="left:1180px;top:237.5px;color:#f06cb4">13.6 GB</div>
<div class="t" style="left:1414px;top:237.5px;color:#f06cb4">English</div>
<div class="t" style="left:1522px;top:237.5px;color:#f06cb4">Bluray-1080p Re</div>
<svg class="s" style="left:460px;top:236px" width="18" height="19" viewBox="0 0 18 19"><circle cx="8.4" cy="10.8" r="7.5" fill="url(#ng)"/><path d="M3.6 7.6 Q5 4.6 8 4.1" fill="none" stroke="#ff9a8a" stroke-width="0.8" stroke-opacity="0.8"/><rect x="3" y="9.9" width="11" height="2" fill="#fff"/></svg>
<div class="t" style="left:271px;top:256.5px;color:#f06cb4">usenet</div>
<div class="t" style="left:361px;top:256.5px;color:#f06cb4">71 days</div>
<div class="t" style="left:514px;top:256.5px;color:#f06cb4">Severance.S01E01.Good.News.About.Hell.1080p.</div>
<div class="t" style="left:919px;top:256.5px;color:#f06cb4">DrunkenSlug (Prowlarr)</div>
<div class="t" style="left:1180px;top:256.5px;color:#f06cb4">13.6 GB</div>
<div class="t" style="left:1414px;top:256.5px;color:#f06cb4">English</div>
<div class="t" style="left:1522px;top:256.5px;color:#f06cb4">Bluray-1080p Re</div>
<svg class="s" style="left:460px;top:255px" width="18" height="19" viewBox="0 0 18 19"><circle cx="8.4" cy="10.8" r="7.5" fill="url(#ng)"/><path d="M3.6 7.6 Q5 4.6 8 4.1" fill="none" stroke="#ff9a8a" stroke-width="0.8" stroke-opacity="0.8"/><rect x="3" y="9.9" width="11" height="2" fill="#fff"/></svg>
<div class="t" style="left:271px;top:275.5px;color:#f06cb4">usenet</div>
<div class="t" style="left:361px;top:275.5px;color:#f06cb4">71 days</div>
<div class="t" style="left:514px;top:275.5px;color:#f06cb4">Severance.S01E01.Good.News.About.Hell.1080p.</div>
<div class="t" style="left:919px;top:275.5px;color:#f06cb4">DrunkenSlug (Prowlarr)</div>
<div class="t" style="left:1180px;top:275.5px;color:#f06cb4">13.6 GB</div>
<div class="t" style="left:1414px;top:275.5px;color:#f06cb4">English</div>
<div class="t" style="left:1522px;top:275.5px;color:#f06cb4">Bluray-1080p Re</div>
<svg class="s" style="left:460px;top:274px" width="18" height="19" viewBox="0 0 18 19"><circle cx="8.4" cy="10.8" r="7.5" fill="url(#ng)"/><path d="M3.6 7.6 Q5 4.6 8 4.1" fill="none" stroke="#ff9a8a" stroke-width="0.8" stroke-opacity="0.8"/><rect x="3" y="9.9" width="11" height="2" fill="#fff"/></svg>
<div class="t" style="left:271px;top:294.5px;color:#f06cb4">usenet</div>
<div class="t" style="left:361px;top:294.5px;color:#f06cb4">63 days</div>
<div class="t" style="left:514px;top:294.5px;color:#f06cb4">Severance.S01E01.Good.News.About.Hell.1080p.</div>
<div class="t" style="left:919px;top:294.5px;color:#f06cb4">NZBgeek (Prowlarr)</div>
<div class="t" style="left:1180px;top:294.5px;color:#f06cb4">12.6 GB</div>
<div class="t" style="left:1414px;top:294.5px;color:#f06cb4">English</div>
<div class="t" style="left:1522px;top:294.5px;color:#f06cb4">Bluray-1080p Re</div>
<svg class="s" style="left:460px;top:293px" width="18" height="19" viewBox="0 0 18 19"><circle cx="8.4" cy="10.8" r="7.5" fill="url(#ng)"/><path d="M3.6 7.6 Q5 4.6 8 4.1" fill="none" stroke="#ff9a8a" stroke-width="0.8" stroke-opacity="0.8"/><rect x="3" y="9.9" width="11" height="2" fill="#fff"/></svg>
<div class="t" style="left:271px;top:313.5px;color:#f06cb4">usenet</div>
<div class="t" style="left:361px;top:313.5px;color:#f06cb4">54 days</div>
<div class="t" style="left:514px;top:313.5px;color:#f06cb4">Severance.S01E01.1080p.BluRay.x264-BORDURE</div>
<div class="t" style="left:919px;top:313.5px;color:#f06cb4">DrunkenSlug (Prowlarr)</div>
<div class="t" style="left:1180px;top:313.5px;color:#f06cb4">6.6 GB</div>
<div class="t" style="left:1414px;top:313.5px;color:#f06cb4">English</div>
<div class="t" style="left:1522px;top:313.5px;color:#f06cb4">Bluray-1080p</div>
<svg class="s" style="left:460px;top:312px" width="18" height="19" viewBox="0 0 18 19"><circle cx="8.4" cy="10.8" r="7.5" fill="url(#ng)"/><path d="M3.6 7.6 Q5 4.6 8 4.1" fill="none" stroke="#ff9a8a" stroke-width="0.8" stroke-opacity="0.8"/><rect x="3" y="9.9" width="11" height="2" fill="#fff"/></svg>
<div class="t" style="left:271px;top:332.5px;color:#f06cb4">usenet</div>
<div class="t" style="left:361px;top:332.5px;color:#f06cb4">69 days</div>
<div class="t" style="left:514px;top:332.5px;color:#f06cb4">Severance.S01E01.Good.News.About.Hell.1080p.</div>
<div class="t" style="left:919px;top:332.5px;color:#f06cb4">DrunkenSlug (Prowlarr)</div>
<div class="t" style="left:1180px;top:332.5px;color:#f06cb4">2.8 GB</div>
<div class="t" style="left:1414px;top:332.5px;color:#f06cb4">English</div>
<div class="t" style="left:1522px;top:332.5px;color:#f06cb4">Bluray-1080p</div>
<svg class="s" style="left:460px;top:331px" width="18" height="19" viewBox="0 0 18 19"><circle cx="8.4" cy="10.8" r="7.5" fill="url(#ng)"/><path d="M3.6 7.6 Q5 4.6 8 4.1" fill="none" stroke="#ff9a8a" stroke-width="0.8" stroke-opacity="0.8"/><rect x="3" y="9.9" width="11" height="2" fill="#fff"/></svg>
<div class="t" style="left:271px;top:351.5px;color:#f06cb4">usenet</div>
<div class="t" style="left:361px;top:351.5px;color:#f06cb4">69 days</div>
<div class="t" style="left:514px;top:351.5px;color:#f06cb4">Severance.S01E01.Good.News.About.Hell.1080p.</div>
<div class="t" style="left:919px;top:351.5px;color:#f06cb4">DrunkenSlug (Prowlarr)</div>
<div class="t" style="left:1180px;top:351.5px;color:#f06cb4">2.8 GB</div>
<div class="t" style="left:1414px;top:351.5px;color:#f06cb4">English</div>
<div class="t" style="left:1522px;top:351.5px;color:#f06cb4">Bluray-1080p</div>
<svg class="s" style="left:460px;top:350px" width="18" height="19" viewBox="0 0 18 19"><circle cx="8.4" cy="10.8" r="7.5" fill="url(#ng)"/><path d="M3.6 7.6 Q5 4.6 8 4.1" fill="none" stroke="#ff9a8a" stroke-width="0.8" stroke-opacity="0.8"/><rect x="3" y="9.9" width="11" height="2" fill="#fff"/></svg>
<div class="t" style="left:271px;top:370.5px;color:#f06cb4">usenet</div>
<div class="t" style="left:361px;top:370.5px;color:#f06cb4">69 days</div>
<div class="t" style="left:514px;top:370.5px;color:#f06cb4">Severance.S01E01.Good.News.About.Hell.1080p.</div>
<div class="t" style="left:919px;top:370.5px;color:#f06cb4">NZBgeek (Prowlarr)</div>
<div class="t" style="left:1180px;top:370.5px;color:#f06cb4">2.6 GB</div>
<div class="t" style="left:1414px;top:370.5px;color:#f06cb4">English</div>
<div class="t" style="left:1522px;top:370.5px;color:#f06cb4">Bluray-1080p</div>
<svg class="s" style="left:460px;top:369px" width="18" height="19" viewBox="0 0 18 19"><circle cx="8.4" cy="10.8" r="7.5" fill="url(#ng)"/><path d="M3.6 7.6 Q5 4.6 8 4.1" fill="none" stroke="#ff9a8a" stroke-width="0.8" stroke-opacity="0.8"/><rect x="3" y="9.9" width="11" height="2" fill="#fff"/></svg>
<div class="t" style="left:271px;top:389.5px;color:#f06cb4">usenet</div>
<div class="t" style="left:361px;top:389.5px;color:#f06cb4">69 days</div>
<div class="t" style="left:514px;top:389.5px;color:#f06cb4">Severance.S01E01.Good.News.About.Hell.1080p.</div>
<div class="t" style="left:919px;top:389.5px;color:#f06cb4">NZBgeek (Prowlarr)</div>
<div class="t" style="left:1180px;top:389.5px;color:#f06cb4">2.6 GB</div>
<div class="t" style="left:1414px;top:389.5px;color:#f06cb4">English</div>
<div class="t" style="left:1522px;top:389.5px;color:#f06cb4">Bluray-1080p</div>
<svg class="s" style="left:460px;top:388px" width="18" height="19" viewBox="0 0 18 19"><circle cx="8.4" cy="10.8" r="7.5" fill="url(#ng)"/><path d="M3.6 7.6 Q5 4.6 8 4.1" fill="none" stroke="#ff9a8a" stroke-width="0.8" stroke-opacity="0.8"/><rect x="3" y="9.9" width="11" height="2" fill="#fff"/></svg>
<div class="t" style="left:271px;top:408.5px;color:#f06cb4">usenet</div>
<div class="t" style="left:361px;top:408.5px;color:#f06cb4">70 days</div>
<div class="t" style="left:514px;top:408.5px;color:#f06cb4">Severance.S01E01.Good.News.About.Hell.1080p.</div>
<div class="t" style="left:919px;top:408.5px;color:#f06cb4">DrunkenSlug (Prowlarr)</div>
<div class="t" style="left:1180px;top:408.5px;color:#f06cb4">2.1 GB</div>
<div class="t" style="left:1414px;top:408.5px;color:#f06cb4">English</div>
<div class="t" style="left:1522px;top:408.5px;color:#f06cb4">Bluray-1080p</div>
<svg class="s" style="left:460px;top:407px" width="18" height="19" viewBox="0 0 18 19"><circle cx="8.4" cy="10.8" r="7.5" fill="url(#ng)"/><path d="M3.6 7.6 Q5 4.6 8 4.1" fill="none" stroke="#ff9a8a" stroke-width="0.8" stroke-opacity="0.8"/><rect x="3" y="9.9" width="11" height="2" fill="#fff"/></svg>
<div class="t" style="left:271px;top:427.5px;color:#f06cb4">usenet</div>
<div class="t" style="left:361px;top:427.5px;color:#f06cb4">70 days</div>
<div class="t" style="left:514px;top:427.5px;color:#f06cb4">Severance.S01E01.Good.News.About.Hell.1080p.</div>
<div class="t" style="left:919px;top:427.5px;color:#f06cb4">NZBgeek (Prowlarr)</div>
<div class="t" style="left:1180px;top:427.5px;color:#f06cb4">2.0 GB</div>
<div class="t" style="left:1414px;top:427.5px;color:#f06cb4">English</div>
<div class="t" style="left:1522px;top:427.5px;color:#f06cb4">Bluray-1080p</div>
<svg class="s" style="left:460px;top:426px" width="18" height="19" viewBox="0 0 18 19"><circle cx="8.4" cy="10.8" r="7.5" fill="url(#ng)"/><path d="M3.6 7.6 Q5 4.6 8 4.1" fill="none" stroke="#ff9a8a" stroke-width="0.8" stroke-opacity="0.8"/><rect x="3" y="9.9" width="11" height="2" fill="#fff"/></svg>
<div class="t" style="left:271px;top:446.5px;color:#f06cb4">usenet</div>
<div class="t" style="left:361px;top:446.5px;color:#f06cb4">55 days</div>
<div class="t" style="left:514px;top:446.5px;color:#f06cb4">Severance.S01E01.1080p.BluRay.x264-BORDURE</div>
<div class="t" style="left:919px;top:446.5px;color:#f06cb4">Miatrix (Prowlarr)</div>
<div class="t" style="left:1180px;top:446.5px;color:#f06cb4">6.6 GB</div>
<div class="t" style="left:1414px;top:446.5px;color:#f06cb4">English</div>
<div class="t" style="left:1522px;top:446.5px;color:#f06cb4">Bluray-1080p</div>
<svg class="s" style="left:460px;top:445px" width="18" height="19" viewBox="0 0 18 19"><circle cx="8.4" cy="10.8" r="7.5" fill="url(#ng)"/><path d="M3.6 7.6 Q5 4.6 8 4.1" fill="none" stroke="#ff9a8a" stroke-width="0.8" stroke-opacity="0.8"/><rect x="3" y="9.9" width="11" height="2" fill="#fff"/></svg>
<div class="t" style="left:271px;top:465.5px;color:#f06cb4">usenet</div>
<div class="t" style="left:361px;top:465.5px;color:#f06cb4">55 days</div>
<div class="t" style="left:514px;top:465.5px;color:#f06cb4">Severance.S01E01.1080p.BluRay.x264-BORDURE</div>
<div class="t" style="left:919px;top:465.5px;color:#f06cb4">Miatrix (Prowlarr)</div>
<div class="t" style="left:1180px;top:465.5px;color:#f06cb4">6.6 GB</div>
<div class="t" style="left:1414px;top:465.5px;color:#f06cb4">English</div>
<div class="t" style="left:1522px;top:465.5px;color:#f06cb4">Bluray-1080p</div>
<svg class="s" style="left:460px;top:464px" width="18" height="19" viewBox="0 0 18 19"><circle cx="8.4" cy="10.8" r="7.5" fill="url(#ng)"/><path d="M3.6 7.6 Q5 4.6 8 4.1" fill="none" stroke="#ff9a8a" stroke-width="0.8" stroke-opacity="0.8"/><rect x="3" y="9.9" width="11" height="2" fill="#fff"/></svg>
<div class="t" style="left:271px;top:484.5px;color:#f06cb4">usenet</div>
<div class="t" style="left:361px;top:484.5px;color:#f06cb4">55 days</div>
<div class="t" style="left:514px;top:484.5px;color:#f06cb4">Severance.S01E01.1080p.BluRay.x264-BORDURE</div>
<div class="t" style="left:919px;top:484.5px;color:#f06cb4">Miatrix (Prowlarr)</div>
<div class="t" style="left:1180px;top:484.5px;color:#f06cb4">6.7 GB</div>
<div class="t" style="left:1414px;top:484.5px;color:#f06cb4">English</div>
<div class="t" style="left:1522px;top:484.5px;color:#f06cb4">Bluray-1080p</div>
<svg class="s" style="left:460px;top:483px" width="18" height="19" viewBox="0 0 18 19"><circle cx="8.4" cy="10.8" r="7.5" fill="url(#ng)"/><path d="M3.6 7.6 Q5 4.6 8 4.1" fill="none" stroke="#ff9a8a" stroke-width="0.8" stroke-opacity="0.8"/><rect x="3" y="9.9" width="11" height="2" fill="#fff"/></svg>
<div class="t" style="left:271px;top:503.5px;color:#f06cb4">usenet</div>
<div class="t" style="left:361px;top:503.5px;color:#f06cb4">69 days</div>
<div class="t" style="left:514px;top:503.5px;color:#f06cb4">Severance S01E01 Good News About Hell 1080p</div>
<div class="t" style="left:919px;top:503.5px;color:#f06cb4">Miatrix (Prowlarr)</div>
<div class="t" style="left:1180px;top:503.5px;color:#f06cb4">2.7 GB</div>
<div class="t" style="left:1414px;top:503.5px;color:#f06cb4">English</div>
<div class="t" style="left:1522px;top:503.5px;color:#f06cb4">Bluray-1080p</div>
<svg class="s" style="left:460px;top:502px" width="18" height="19" viewBox="0 0 18 19"><circle cx="8.4" cy="10.8" r="7.5" fill="url(#ng)"/><path d="M3.6 7.6 Q5 4.6 8 4.1" fill="none" stroke="#ff9a8a" stroke-width="0.8" stroke-opacity="0.8"/><rect x="3" y="9.9" width="11" height="2" fill="#fff"/></svg>
<div class="t" style="left:271px;top:522.5px;color:#f06cb4">torrent</div>
<div class="t" style="left:361px;top:522.5px;color:#f06cb4">69 days</div>
<div class="t" style="left:514px;top:522.5px;color:#f06cb4">Severance S01E01 Good News About Hell 1080p</div>
<div class="t" style="left:919px;top:522.5px;color:#f06cb4">The Pirate Bay (Prowlarr)</div>
<div class="t" style="left:1180px;top:522.5px;color:#f06cb4">2.4 GB</div>
<div class="t" style="left:1414px;top:522.5px;color:#f06cb4">English</div>
<div class="t" style="left:1522px;top:522.5px;color:#f06cb4">Bluray-1080p</div>
<div class="t" style="left:1297px;top:522.5px;color:#44e88e">64 / 51</div>
<svg class="s" style="left:460px;top:521px" width="18" height="19" viewBox="0 0 18 19"><circle cx="8.4" cy="10.8" r="7.5" fill="url(#ng)"/><path d="M3.6 7.6 Q5 4.6 8 4.1" fill="none" stroke="#ff9a8a" stroke-width="0.8" stroke-opacity="0.8"/><rect x="3" y="9.9" width="11" height="2" fill="#fff"/></svg>
<div class="t" style="left:271px;top:541.5px;color:#f06cb4">usenet</div>
<div class="t" style="left:361px;top:541.5px;color:#f06cb4">65 days</div>
<div class="t" style="left:514px;top:541.5px;color:#f06cb4">Severance.S01E01.Good.News.About.Hell.1080p.</div>
<div class="t" style="left:919px;top:541.5px;color:#f06cb4">DrunkenSlug (Prowlarr)</div>
<div class="t" style="left:1180px;top:541.5px;color:#f06cb4">1.1 GB</div>
<div class="t" style="left:1414px;top:541.5px;color:#f06cb4">English</div>
<div class="t" style="left:1522px;top:541.5px;color:#f06cb4">HDTV-1080p</div>
<svg class="s" style="left:460px;top:540px" width="18" height="19" viewBox="0 0 18 19"><circle cx="8.4" cy="10.8" r="7.5" fill="url(#ng)"/><path d="M3.6 7.6 Q5 4.6 8 4.1" fill="none" stroke="#ff9a8a" stroke-width="0.8" stroke-opacity="0.8"/><rect x="3" y="9.9" width="11" height="2" fill="#fff"/></svg>
<div class="t" style="left:271px;top:560.5px;color:#f06cb4">usenet</div>
<div class="t" style="left:361px;top:560.5px;color:#f06cb4">65 days</div>
<div class="t" style="left:514px;top:560.5px;color:#f06cb4">Severance.S01E01.Good.News.About.Hell.1080p.</div>
<div class="t" style="left:919px;top:560.5px;color:#f06cb4">NZBgeek (Prowlarr)</div>
<div class="t" style="left:1180px;top:560.5px;color:#f06cb4">1.0 GB</div>
<div class="t" style="left:1414px;top:560.5px;color:#f06cb4">English</div>
<div class="t" style="left:1522px;top:560.5px;color:#f06cb4">HDTV-1080p</div>
<svg class="s" style="left:460px;top:559px" width="18" height="19" viewBox="0 0 18 19"><circle cx="8.4" cy="10.8" r="7.5" fill="url(#ng)"/><path d="M3.6 7.6 Q5 4.6 8 4.1" fill="none" stroke="#ff9a8a" stroke-width="0.8" stroke-opacity="0.8"/><rect x="3" y="9.9" width="11" height="2" fill="#fff"/></svg>
<div class="t" style="left:271px;top:579.5px;color:#f06cb4">usenet</div>
<div class="t" style="left:361px;top:579.5px;color:#f06cb4">1116 days</div>
<div class="t" style="left:514px;top:579.5px;color:#f06cb4">Severance.S01E01.1080p.HEVC.x265-MeGusta</div>
<div class="t" style="left:919px;top:579.5px;color:#f06cb4">NZBgeek (Prowlarr)</div>
<div class="t" style="left:1180px;top:579.5px;color:#f06cb4">0.5 GB</div>
<div class="t" style="left:1414px;top:579.5px;color:#f06cb4">English</div>
<div class="t" style="left:1522px;top:579.5px;color:#f06cb4">HDTV-1080p</div>
<svg class="s" style="left:460px;top:578px" width="18" height="19" viewBox="0 0 18 19"><circle cx="8.4" cy="10.8" r="7.5" fill="url(#ng)"/><path d="M3.6 7.6 Q5 4.6 8 4.1" fill="none" stroke="#ff9a8a" stroke-width="0.8" stroke-opacity="0.8"/><rect x="3" y="9.9" width="11" height="2" fill="#fff"/></svg>
<div class="t" style="left:271px;top:598.5px;color:#f06cb4">usenet</div>
<div class="t" style="left:361px;top:598.5px;color:#f06cb4">1116 days</div>
<div class="t" style="left:514px;top:598.5px;color:#f06cb4">Severance.S01E01.1080p.HEVC.x265-MeGusta</div>
<div class="t" style="left:919px;top:598.5px;color:#f06cb4">DrunkenSlug (Prowlarr)</div>
<div class="t" style="left:1180px;top:598.5px;color:#f06cb4">0.5 GB</div>
<div class="t" style="left:1414px;top:598.5px;color:#f06cb4">English</div>
<div class="t" style="left:1522px;top:598.5px;color:#f06cb4">HDTV-1080p</div>
<svg class="s" style="left:460px;top:597px" width="18" height="19" viewBox="0 0 18 19"><circle cx="8.4" cy="10.8" r="7.5" fill="url(#ng)"/><path d="M3.6 7.6 Q5 4.6 8 4.1" fill="none" stroke="#ff9a8a" stroke-width="0.8" stroke-opacity="0.8"/><rect x="3" y="9.9" width="11" height="2" fill="#fff"/></svg>
<div class="t" style="left:271px;top:617.5px;color:#f06cb4">usenet</div>
<div class="t" style="left:361px;top:617.5px;color:#f06cb4">1116 days</div>
<div class="t" style="left:514px;top:617.5px;color:#f06cb4">Severance.S01E01.1080p.HEVC.x265-MeGusta</div>
<div class="t" style="left:919px;top:617.5px;color:#f06cb4">Miatrix (Prowlarr)</div>
<div class="t" style="left:1180px;top:617.5px;color:#f06cb4">0.6 GB</div>
<div class="t" style="left:1414px;top:617.5px;color:#f06cb4">English</div>
<div class="t" style="left:1522px;top:617.5px;color:#f06cb4">HDTV-1080p</div>
<svg class="s" style="left:460px;top:616px" width="18" height="19" viewBox="0 0 18 19"><circle cx="8.4" cy="10.8" r="7.5" fill="url(#ng)"/><path d="M3.6 7.6 Q5 4.6 8 4.1" fill="none" stroke="#ff9a8a" stroke-width="0.8" stroke-opacity="0.8"/><rect x="3" y="9.9" width="11" height="2" fill="#fff"/></svg>
<div class="t" style="left:271px;top:636.5px;color:#f06cb4">torrent</div>
<div class="t" style="left:361px;top:636.5px;color:#f06cb4">1116 days</div>
<div class="t" style="left:514px;top:636.5px;color:#f06cb4">Severance S01E01 1080p HEVC x265-MeGusta</div>
<div class="t" style="left:919px;top:636.5px;color:#f06cb4">The Pirate Bay (Prowlarr)</div>
<div class="t" style="left:1180px;top:636.5px;color:#f06cb4">0.5 GB</div>
<div class="t" style="left:1414px;top:636.5px;color:#f06cb4">English</div>
<div class="t" style="left:1522px;top:636.5px;color:#f06cb4">HDTV-1080p</div>
<div class="t" style="left:1297px;top:636.5px;color:#44e88e">279 / 211</div>
<svg class="s" style="left:460px;top:635px" width="18" height="19" viewBox="0 0 18 19"><circle cx="8.4" cy="10.8" r="7.5" fill="url(#ng)"/><path d="M3.6 7.6 Q5 4.6 8 4.1" fill="none" stroke="#ff9a8a" stroke-width="0.8" stroke-opacity="0.8"/><rect x="3" y="9.9" width="11" height="2" fill="#fff"/></svg>
<div class="t" style="left:271px;top:655.5px;color:#f06cb4">torrent</div>
<div class="t" style="left:361px;top:655.5px;color:#f06cb4">1116 days</div>
<div class="t" style="left:514px;top:655.5px;color:#f06cb4">Severance.S01E01.1080p.HEVC.x265-MeGusta[TGx</div>
<div class="t" style="left:919px;top:655.5px;color:#f06cb4">The Pirate Bay (Prowlarr)</div>
<div class="t" style="left:1180px;top:655.5px;color:#f06cb4">0.5 GB</div>
<div class="t" style="left:1414px;top:655.5px;color:#f06cb4">English</div>
<div class="t" style="left:1522px;top:655.5px;color:#f06cb4">HDTV-1080p</div>
<div class="t" style="left:1297px;top:655.5px;color:#44e88e">12 / 4</div>
<svg class="s" style="left:460px;top:654px" width="18" height="19" viewBox="0 0 18 19"><circle cx="8.4" cy="10.8" r="7.5" fill="url(#ng)"/><path d="M3.6 7.6 Q5 4.6 8 4.1" fill="none" stroke="#ff9a8a" stroke-width="0.8" stroke-opacity="0.8"/><rect x="3" y="9.9" width="11" height="2" fill="#fff"/></svg>
<div class="t" style="left:271px;top:674.5px;color:#f06cb4">torrent</div>
<div class="t" style="left:361px;top:674.5px;color:#f06cb4">365 days</div>
<div class="t" style="left:514px;top:674.5px;color:#f06cb4">Severance S01E01 1080p HEVC x265 MeGusta[ezt</div>
<div class="t" style="left:919px;top:674.5px;color:#f06cb4">TorrentDownload (Prowlarr)</div>
<div class="t" style="left:1180px;top:674.5px;color:#f06cb4">0.5 GB</div>
<div class="t" style="left:1414px;top:674.5px;color:#f06cb4">English</div>
<div class="t" style="left:1522px;top:674.5px;color:#f06cb4">HDTV-1080p</div>
<div class="t" style="left:1297px;top:674.5px;color:#44e88e">682 / 45</div>
<svg class="s" style="left:460px;top:673px" width="18" height="19" viewBox="0 0 18 19"><circle cx="8.4" cy="10.8" r="7.5" fill="url(#ng)"/><path d="M3.6 7.6 Q5 4.6 8 4.1" fill="none" stroke="#ff9a8a" stroke-width="0.8" stroke-opacity="0.8"/><rect x="3" y="9.9" width="11" height="2" fill="#fff"/></svg>
<div class="t" style="left:271px;top:693.5px;color:#f06cb4">torrent</div>
<div class="t" style="left:361px;top:693.5px;color:#f06cb4">365 days</div>
<div class="t" style="left:514px;top:693.5px;color:#f06cb4">Severance S01E01 1080p HEVC x265 MeGusta[ezt</div>
<div class="t" style="left:919px;top:693.5px;color:#f06cb4">LimeTorrents (Prowlarr)</div>
<div class="t" style="left:1180px;top:693.5px;color:#f06cb4">0.5 GB</div>
<div class="t" style="left:1414px;top:693.5px;color:#f06cb4">English</div>
<div class="t" style="left:1522px;top:693.5px;color:#f06cb4">HDTV-1080p</div>
<div class="t" style="left:1297px;top:693.5px;color:#44e88e">238 / 137</div>
<svg class="s" style="left:460px;top:692px" width="18" height="19" viewBox="0 0 18 19"><circle cx="8.4" cy="10.8" r="7.5" fill="url(#ng)"/><path d="M3.6 7.6 Q5 4.6 8 4.1" fill="none" stroke="#ff9a8a" stroke-width="0.8" stroke-opacity="0.8"/><rect x="3" y="9.9" width="11" height="2" fill="#fff"/></svg>
<div class="t" style="left:271px;top:712.5px;color:#f06cb4">torrent</div>
<div class="t" style="left:361px;top:712.5px;color:#f06cb4">59 days</div>
<div class="t" style="left:514px;top:712.5px;color:#f06cb4">Severance S01E01 Good News About Hell 1080p</div>
<div class="t" style="left:919px;top:712.5px;color:#f06cb4">LimeTorrents (Prowlarr)</div>
<div class="t" style="left:1180px;top:712.5px;color:#f06cb4">1.0 GB</div>
<div class="t" style="left:1414px;top:712.5px;color:#f06cb4">English</div>
<div class="t" style="left:1522px;top:712.5px;color:#f06cb4">HDTV-1080p</div>
<div class="t" style="left:1297px;top:712.5px;color:#44e88e">96 / 21</div>
<svg class="s" style="left:460px;top:711px" width="18" height="19" viewBox="0 0 18 19"><circle cx="8.4" cy="10.8" r="7.5" fill="url(#ng)"/><path d="M3.6 7.6 Q5 4.6 8 4.1" fill="none" stroke="#ff9a8a" stroke-width="0.8" stroke-opacity="0.8"/><rect x="3" y="9.9" width="11" height="2" fill="#fff"/></svg>
<div class="t" style="left:271px;top:731.5px;color:#f06cb4">torrent</div>
<div class="t" style="left:361px;top:731.5px;color:#f06cb4">59 days</div>
<div class="t" style="left:514px;top:731.5px;color:#f06cb4">Severance S01E01 Good News About Hell 1080p</div>
<div class="t" style="left:919px;top:731.5px;color:#f06cb4">TorrentDownload (Prowlarr)</div>
<div class="t" style="left:1180px;top:731.5px;color:#f06cb4">1.0 GB</div>
<div class="t" style="left:1414px;top:731.5px;color:#f06cb4">English</div>
<div class="t" style="left:1522px;top:731.5px;color:#f06cb4">HDTV-1080p</div>
<div class="t" style="left:1297px;top:731.5px;color:#44e88e">174 / 11</div>
<svg class="s" style="left:460px;top:730px" width="18" height="19" viewBox="0 0 18 19"><circle cx="8.4" cy="10.8" r="7.5" fill="url(#ng)"/><path d="M3.6 7.6 Q5 4.6 8 4.1" fill="none" stroke="#ff9a8a" stroke-width="0.8" stroke-opacity="0.8"/><rect x="3" y="9.9" width="11" height="2" fill="#fff"/></svg>
<div class="t" style="left:271px;top:750.5px;color:#f06cb4">torrent</div>
<div class="t" style="left:361px;top:750.5px;color:#f06cb4">1094 days</div>
<div class="t" style="left:514px;top:750.5px;color:#f06cb4">Severance S01E01 1080p HEVC x265-MeGusta</div>
<div class="t" style="left:919px;top:750.5px;color:#f06cb4">EZTV (Prowlarr)</div>
<div class="t" style="left:1180px;top:750.5px;color:#f06cb4">0.5 GB</div>
<div class="t" style="left:1414px;top:750.5px;color:#f06cb4">English</div>
<div class="t" style="left:1522px;top:750.5px;color:#f06cb4">HDTV-1080p</div>
<div class="t" style="left:1297px;top:750.5px;color:#44e88e">275 / 0</div>
<svg class="s" style="left:460px;top:749px" width="18" height="19" viewBox="0 0 18 19"><circle cx="8.4" cy="10.8" r="7.5" fill="url(#ng)"/><path d="M3.6 7.6 Q5 4.6 8 4.1" fill="none" stroke="#ff9a8a" stroke-width="0.8" stroke-opacity="0.8"/><rect x="3" y="9.9" width="11" height="2" fill="#fff"/></svg>
<div class="t" style="left:271px;top:769.5px;color:#f06cb4">torrent</div>
<div class="t" style="left:361px;top:769.5px;color:#f06cb4">365 days</div>
<div class="t" style="left:514px;top:769.5px;color:#f06cb4">Severance S01E01 1080p HEVC x265</div>
<div class="t" style="left:919px;top:769.5px;color:#f06cb4">LimeTorrents (Prowlarr)</div>
<div class="t" style="left:1180px;top:769.5px;color:#f06cb4">0.5 GB</div>
<div class="t" style="left:1414px;top:769.5px;color:#f06cb4">English</div>
<div class="t" style="left:1522px;top:769.5px;color:#f06cb4">HDTV-1080p</div>
<div class="t" style="left:1297px;top:769.5px;color:#44e88e">41 / 11</div>
<svg class="s" style="left:460px;top:768px" width="18" height="19" viewBox="0 0 18 19"><circle cx="8.4" cy="10.8" r="7.5" fill="url(#ng)"/><path d="M3.6 7.6 Q5 4.6 8 4.1" fill="none" stroke="#ff9a8a" stroke-width="0.8" stroke-opacity="0.8"/><rect x="3" y="9.9" width="11" height="2" fill="#fff"/></svg>
<div class="t" style="left:271px;top:788.5px;color:#f06cb4">torrent</div>
<div class="t" style="left:361px;top:788.5px;color:#f06cb4">365 days</div>
<div class="t" style="left:514px;top:788.5px;color:#f06cb4">Severance S01E01 1080p HEVC x265</div>
<div class="t" style="left:919px;top:788.5px;color:#f06cb4">TorrentDownload (Prowlarr)</div>
<div class="t" style="left:1180px;top:788.5px;color:#f06cb4">0.5 GB</div>
<div class="t" style="left:1414px;top:788.5px;color:#f06cb4">English</div>
<div class="t" style="left:1522px;top:788.5px;color:#f06cb4">HDTV-1080p</div>
<div class="t" style="left:1297px;top:788.5px;color:#44e88e">122 / 17</div>
<svg class="s" style="left:460px;top:787px" width="18" height="19" viewBox="0 0 18 19"><circle cx="8.4" cy="10.8" r="7.5" fill="url(#ng)"/><path d="M3.6 7.6 Q5 4.6 8 4.1" fill="none" stroke="#ff9a8a" stroke-width="0.8" stroke-opacity="0.8"/><rect x="3" y="9.9" width="11" height="2" fill="#fff"/></svg>
<div class="t" style="left:271px;top:807.5px;color:#f06cb4">torrent</div>
<div class="t" style="left:361px;top:807.5px;color:#f06cb4">65 days</div>
<div class="t" style="left:514px;top:807.5px;color:#f06cb4">Severance.S01E01.Good.News.About.Hell.1080p.</div>
<div class="t" style="left:919px;top:807.5px;color:#f06cb4">Badass Torrents (Prowlarr)</div>
<div class="t" style="left:1180px;top:807.5px;color:#f06cb4">1.0 GB</div>
<div class="t" style="left:1414px;top:807.5px;color:#f06cb4">English</div>
<div class="t" style="left:1522px;top:807.5px;color:#f06cb4">HDTV-1080p</div>
<div class="t" style="left:1297px;top:807.5px;color:#e8645a">0 / 0</div>
<svg class="s" style="left:460px;top:806px" width="18" height="19" viewBox="0 0 18 19"><circle cx="8.4" cy="10.8" r="7.5" fill="url(#ng)"/><path d="M3.6 7.6 Q5 4.6 8 4.1" fill="none" stroke="#ff9a8a" stroke-width="0.8" stroke-opacity="0.8"/><rect x="3" y="9.9" width="11" height="2" fill="#fff"/></svg>
<div class="t" style="left:271px;top:826.5px;color:#f06cb4">torrent</div>
<div class="t" style="left:361px;top:826.5px;color:#f06cb4">65 days</div>
<div class="t" style="left:514px;top:826.5px;color:#f06cb4">Severance S01E01 Good News About Hell 1080p</div>
<div class="t" style="left:919px;top:826.5px;color:#f06cb4">Torlock (Prowlarr)</div>
<div class="t" style="left:1180px;top:826.5px;color:#f06cb4">1.0 GB</div>
<div class="t" style="left:1414px;top:826.5px;color:#f06cb4">English</div>
<div class="t" style="left:1522px;top:826.5px;color:#f06cb4">HDTV-1080p</div>
<div class="t" style="left:1297px;top:826.5px;color:#e8645a">0 / 0</div>
<svg class="s" style="left:460px;top:825px" width="18" height="19" viewBox="0 0 18 19"><circle cx="8.4" cy="10.8" r="7.5" fill="url(#ng)"/><path d="M3.6 7.6 Q5 4.6 8 4.1" fill="none" stroke="#ff9a8a" stroke-width="0.8" stroke-opacity="0.8"/><rect x="3" y="9.9" width="11" height="2" fill="#fff"/></svg>
<div class="t" style="left:271px;top:845.5px;color:#f06cb4">torrent</div>
<div class="t" style="left:361px;top:845.5px;color:#f06cb4">1116 days</div>
<div class="t" style="left:514px;top:845.5px;color:#f06cb4">Severance S01E01 1080p HEVC x265-MeGusta[TGx</div>
<div class="t" style="left:919px;top:845.5px;color:#f06cb4">Torlock (Prowlarr)</div>
<div class="t" style="left:1180px;top:845.5px;color:#f06cb4">0.5 GB</div>
<div class="t" style="left:1414px;top:845.5px;color:#f06cb4">English</div>
<div class="t" style="left:1522px;top:845.5px;color:#f06cb4">HDTV-1080p</div>
<div class="t" style="left:1297px;top:845.5px;color:#e8645a">0 / 0</div>
<svg class="s" style="left:460px;top:844px" width="18" height="19" viewBox="0 0 18 19"><circle cx="8.4" cy="10.8" r="7.5" fill="url(#ng)"/><path d="M3.6 7.6 Q5 4.6 8 4.1" fill="none" stroke="#ff9a8a" stroke-width="0.8" stroke-opacity="0.8"/><rect x="3" y="9.9" width="11" height="2" fill="#fff"/></svg>
<div class="t" style="left:271px;top:864.5px;color:#f06cb4">torrent</div>
<div class="t" style="left:361px;top:864.5px;color:#f06cb4">1116 days</div>
<div class="t" style="left:514px;top:864.5px;color:#f06cb4">Severance S01E01 1080p HEVC x265-MeGusta[ezt</div>
<div class="t" style="left:919px;top:864.5px;color:#f06cb4">Torlock (Prowlarr)</div>
<div class="t" style="left:1180px;top:864.5px;color:#f06cb4">0.5 GB</div>
<div class="t" style="left:1414px;top:864.5px;color:#f06cb4">English</div>
<div class="t" style="left:1522px;top:864.5px;color:#f06cb4">HDTV-1080p</div>
<div class="t" style="left:1297px;top:864.5px;color:#e8645a">0 / 0</div>
<svg class="s" style="left:460px;top:863px" width="18" height="19" viewBox="0 0 18 19"><circle cx="8.4" cy="10.8" r="7.5" fill="url(#ng)"/><path d="M3.6 7.6 Q5 4.6 8 4.1" fill="none" stroke="#ff9a8a" stroke-width="0.8" stroke-opacity="0.8"/><rect x="3" y="9.9" width="11" height="2" fill="#fff"/></svg>
<div class="r" style="left:244px;top:890px;width:1413px;height:2px;background:#eefaf8"></div>
<div class="t" style="left:253px;top:902.5px;color:#6c7bc4">&lt;enter&gt; details</div>
</div>
</body></html>
